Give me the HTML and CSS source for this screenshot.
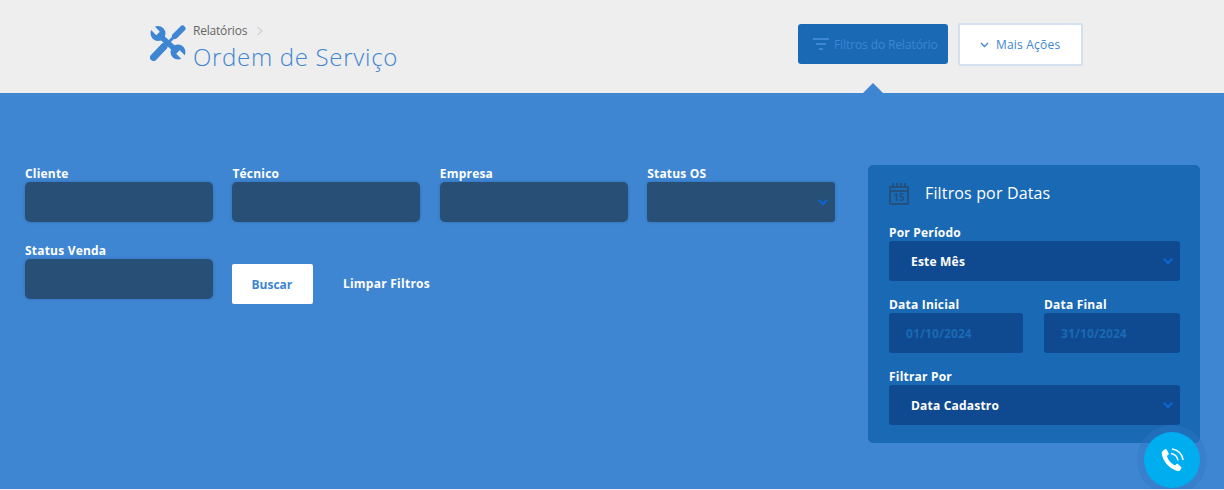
FILE: index.html
```html
<!DOCTYPE html>
<html lang="pt-BR">
<head>
<meta charset="utf-8">
<title>Ordem de Serviço</title>
<link rel="stylesheet" href="styles.css">
</head>
<body>
<header class="top">
  <div class="crumbs">
    <svg class="tools" viewBox="0 0 36 36" width="36" height="36">
      <path d="M9 10L28 27" stroke="#3e85d2" stroke-width="5.500" fill="none"/>
      <circle cx="8" cy="8.500" r="7.500" fill="#3e85d2"/>
      <path d="M0 0L8 8.500" stroke="#eeeeee" stroke-width="5" fill="none"/>
      <circle cx="28" cy="27" r="7.500" fill="#3e85d2"/>
      <path d="M36 35L28 27" stroke="#eeeeee" stroke-width="5" fill="none"/>
      <path d="M3.500 32.500L14 21.500" stroke="#3e85d2" stroke-width="7" stroke-linecap="round" fill="none"/>
      <path d="M14 21.500L26 10" stroke="#3e85d2" stroke-width="3" fill="none"/>
      <path d="M25 11L32.500 3.500" stroke="#3e85d2" stroke-width="6" stroke-linecap="round" fill="none"/>
    </svg>
    <div class="crumb-text">
      <div class="crumb-line"><span>Relatórios</span><svg class="crumb-arrow" viewBox="0 0 8 10" width="8" height="10"><path d="M1.500 1l4.500 4-4.500 4" fill="none" stroke="#d4d4d4" stroke-width="1.500"/></svg></div>
      <h1>Ordem de Serviço</h1>
    </div>
  </div>
  <div class="actions">
    <button class="btn-filter" type="button">
      <svg viewBox="0 0 16 12" width="16" height="12"><path d="M0 1h16M3 6h10M6 11h4" stroke="#3e85d2" stroke-width="2" fill="none"/></svg>
      Filtros do Relatório
    </button>
    <button class="btn-more" type="button">
      <svg viewBox="0 0 9 6" width="9" height="6"><path d="M1 1l3.500 3.500L8 1" stroke="#3e85d2" stroke-width="1.300" fill="none"/></svg>
      Mais Ações
    </button>
    <span class="pointer"></span>
  </div>
</header>

<main class="panel">
  <section class="filters">
    <div class="field"><label>Cliente</label><div class="box"></div></div>
    <div class="field"><label>Técnico</label><div class="box"></div></div>
    <div class="field"><label>Empresa</label><div class="box"></div></div>
    <div class="field"><label>Status OS</label><div class="box box-select"><svg class="chev" viewBox="0 0 10 7" width="10" height="7"><path d="M1 1l4 4 4-4" stroke="#0a66d6" stroke-width="2" fill="none"/></svg></div></div>
    <div class="field"><label>Status Venda</label><div class="box"></div></div>
    <div class="search-row">
      <button class="btn-search" type="button">Buscar</button>
      <a class="clear" href="#">Limpar Filtros</a>
    </div>
  </section>

  <aside class="dates">
    <div class="dates-head">
      <svg viewBox="0 0 20 22" width="20" height="22"><path d="M1 4h18v16a1 1 0 0 1-1 1H2a1 1 0 0 1-1-1z M1 8h18" fill="none" stroke="#22517f" stroke-width="2"/><path d="M4 0v5M8 0v5M12 0v5M16 0v5" stroke="#22517f" stroke-width="2"/><text x="10" y="18" text-anchor="middle" class="cal-num">15</text></svg>
      <h2>Filtros por Datas</h2>
    </div>
    <div class="field"><label>Por Período</label><div class="box-dark">Este Mês<svg class="chev" viewBox="0 0 10 7" width="10" height="7"><path d="M1 1l4 4 4-4" stroke="#0a66d6" stroke-width="2" fill="none"/></svg></div></div>
    <div class="date-pair">
      <div class="field"><label>Data Inicial</label><div class="box-dark box-date">01/10/2024</div></div>
      <div class="field"><label>Data Final</label><div class="box-dark box-date">31/10/2024</div></div>
    </div>
    <div class="field"><label>Filtrar Por</label><div class="box-dark">Data Cadastro<svg class="chev" viewBox="0 0 10 7" width="10" height="7"><path d="M1 1l4 4 4-4" stroke="#0a66d6" stroke-width="2" fill="none"/></svg></div></div>
  </aside>
</main>

<button class="call" type="button" aria-label="Ligar">
  <svg viewBox="0 0 24 24" width="24" height="24">
    <path fill="#fff" d="M3.200 2.400l2.300-1.300c.5-.2 1 0 1.200.4l2 4c.2.400.1.800-.2 1.100L7 8c.8 3.800 4.300 8 8.200 9.300l1.500-1.300c.4-.3.900-.3 1.200 0l3.200 3c.4.300.4.800.2 1.200l-1.400 2.200c-.4.600-1.200.8-2.200.6C9.600 21.500 2 12.500 1.800 5c0-1.100.6-2 1.400-2.600z"/>
    <path fill="none" stroke="#fff" stroke-width="1.500" d="M11 5.500c3.600.6 6.400 3.400 7 7M12 1c6 .6 10.400 5 11 11"/>
  </svg>
</button>
</body>
</html>
```
FILE: styles.css
```css
* { box-sizing: border-box; }
html, body { height: 100%; }
body {
  margin: 0;
  overflow: hidden;
  background: #eeeeee;
  font-family: "Open Sans", "Noto Sans", sans-serif;
  display: flex;
  flex-direction: column;
  position: relative;
  height: 489px;
}
.top {
  height: 93px;
  flex: none;
  display: flex;
  justify-content: space-between;
  align-items: flex-start;
  padding: 23px 141px 0 150px;
}
.crumbs { display: flex; gap: 7px; padding-top: 2px; }
.crumb-text { display: flex; flex-direction: column; }
.crumb-line {
  display: flex;
  align-items: center;
  gap: 9px;
  font-size: 12px;
  line-height: 12px;
  height: 12px;
  letter-spacing: -.2px;
  color: #666;
}
h1 {
  margin: 3px 0 0;
  font-size: 24px;
  line-height: 34px;
  font-weight: 300;
  letter-spacing: .7px;
  color: #3e85d2;
}
.actions { display: flex; gap: 10px; position: relative; align-items: flex-start; height: 43px; }
.btn-filter {
  width: 150px;
  height: 40px;
  margin-top: 1px;
  border: 0;
  border-radius: 3px;
  background: #1a69b5;
  color: #3e85d2;
  font: 12px "Open Sans", sans-serif;
  letter-spacing: -.1px;
  display: flex;
  align-items: center;
  justify-content: flex-start;
  gap: 5px;
  padding: 0 0 0 15px;
}
.btn-more {
  width: 125px;
  height: 43px;
  border: 2px solid #d3e0ee;
  border-radius: 2px;
  background: #fff;
  color: #3e85d2;
  font: 12px "Open Sans", sans-serif;
  letter-spacing: .2px;
  display: flex;
  align-items: center;
  justify-content: flex-start;
  gap: 7px;
  padding: 0 0 0 20px;
}
.pointer {
  position: absolute;
  left: 65px;
  top: 60px;
  width: 0;
  height: 0;
  border-left: 10px solid transparent;
  border-right: 10px solid transparent;
  border-bottom: 10px solid #3e85d2;
}
.panel {
  flex: 1;
  background: #3e85d2;
  display: flex;
  justify-content: space-between;
  align-items: flex-start;
  padding: 72px 24px 0 25px;
}
.filters {
  width: 810px;
  display: grid;
  grid-template-columns: repeat(4, 188px);
  column-gap: 19.400px;
  row-gap: 20px;
}
label {
  display: block;
  color: #fff;
  font-size: 12px;
  line-height: 17px;
  font-weight: 700;
  letter-spacing: .2px;
}
.box {
  height: 40px;
  background: #284f76;
  border-radius: 5px;
  box-shadow: 0 0 3px rgba(30, 70, 120, .3);
  display: flex;
  align-items: center;
  justify-content: flex-end;
}
.box-select { border-radius: 3px; }
.chev { margin-right: 7px; margin-left: auto; }
.search-row {
  grid-column: span 3;
  display: flex;
  align-items: flex-end;
  gap: 29.500px;
  height: 45px;
  margin-top: 17px;
}
.btn-search {
  width: 81px;
  height: 40px;
  border: 0;
  padding: 0 2px 0 0;
  border-radius: 2px;
  background: #fff;
  color: #3e85d2;
  font: 700 12px "Open Sans", sans-serif;
}
.clear {
  color: #fff;
  font-size: 12px;
  font-weight: 700;
  line-height: 40px;
  letter-spacing: .25px;
  text-decoration: none;
}
.dates {
  width: 332px;
  height: 278px;
  background: #1a69b5;
  border-radius: 5px;
  padding: 16px 20px 0 21px;
  display: flex;
  flex-direction: column;
}
.dates-head { display: flex; align-items: center; gap: 16px; height: 25px; margin-bottom: 18px; }
h2 {
  margin: 0;
  color: #fff;
  font-size: 16px;
  font-weight: 400;
  line-height: 25px;
  letter-spacing: .15px;
}
.cal-num { font: 700 10px "Open Sans", sans-serif; fill: #22517f; }
.date-pair, .date-pair + .field { margin-top: 15px; }
.box-dark {
  height: 40px;
  background: #0f4a90;
  border-radius: 3px;
  display: flex;
  align-items: center;
  padding-left: 22px;
  color: #fff;
  font-size: 12px;
  font-weight: 700;
  letter-spacing: .2px;
}
.box-date { color: #1a69b5; padding-left: 17px; letter-spacing: .1px; }
.date-pair { display: grid; grid-template-columns: 134px 136px; column-gap: 21px; }
.call {
  position: absolute;
  left: 1144px;
  top: 432px;
  width: 56px;
  height: 56px;
  border: 0;
  padding: 0;
  border-radius: 50%;
  background: #00aef0;
  box-shadow: 0 0 0 7px rgba(50, 120, 195, .35);
  display: flex;
  align-items: center;
  justify-content: center;
}
```
